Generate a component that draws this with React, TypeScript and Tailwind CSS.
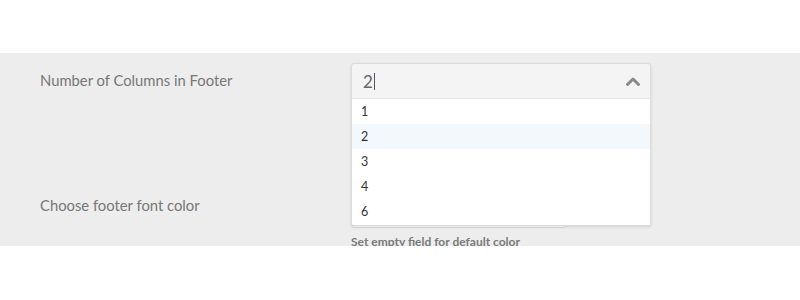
import { useState } from 'react'

const OPTIONS = ['1', '2', '3', '4', '6']

export default function App() {
  const [value] = useState('2')

  return (
    <div className="h-[300px] w-[800px] bg-white pt-[53px] font-['Lato',sans-serif]">
      <div className="h-[193px] bg-[#ededed] overflow-hidden">
        {/* Columns row */}
        <div className="flex h-[140px] pl-[40px]">
          <label className="w-[311px] pt-[17px] text-[14.8px] leading-[20px] text-[#777]">
            Number of Columns in Footer
          </label>
          <div className="relative w-[300px] pt-[10px] z-10">
            <div className="rounded-t-[3px] border border-[#dcdcdc] bg-[#f4f4f4] shadow-[0_1px_3px_rgba(0,0,0,0.12)]">
              <div className="flex h-[34px] items-center justify-between pl-[11px] pr-[10px]">
                <span className="flex items-center text-[17px] leading-none text-[#666]">
                  {value}
                  <span className="ml-[1px] inline-block h-[17px] w-px bg-[#555]" />
                </span>
                <svg width="14" height="9" viewBox="0 0 14 9" fill="none">
                  <path d="M1.5 7.5 L7 2 L12.5 7.5" stroke="#8a8a8a" strokeWidth="3" strokeLinecap="round" strokeLinejoin="round" />
                </svg>
              </div>
              <ul className="rounded-b-[3px] border-t border-[#e6e6e6] bg-white pb-[1px]">
                {OPTIONS.map(o => (
                  <li
                    key={o}
                    className={`h-[25px] pl-[9px] text-[12.5px] leading-[25px] text-[#333] ${o === value ? 'bg-[#f3f8fc]' : ''}`}
                  >
                    {o}
                  </li>
                ))}
              </ul>
            </div>
          </div>
        </div>

        {/* Font color row */}
        <div className="flex pl-[40px]">
          <label className="w-[311px] pt-[2px] text-[14.8px] leading-[20px] text-[#777]">
            Choose footer font color
          </label>
          <div className="w-[300px]">
            <div className="mt-[4px] h-[31px] w-[215px] rounded-[3px] border border-[#dcdcdc] bg-white" />
            <p className="mt-[6px] text-[12px] leading-[16px] font-bold text-[#7a7a7a]">
              Set empty field for default color
            </p>
          </div>
        </div>
      </div>
    </div>
  )
}
